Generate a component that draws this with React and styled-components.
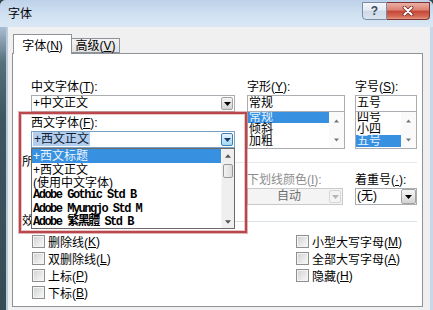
import React from 'react';
import styled, { createGlobalStyle } from 'styled-components';

const GlobalStyle = createGlobalStyle`
  html, body { margin: 0; padding: 0; background: #34474f; }
  body { width: 433px; height: 310px; overflow: hidden; }
  #root { width: 433px; height: 310px; }
  * { box-sizing: border-box; }
  u { text-decoration: underline; text-underline-offset: 1px; }
`;

const FONT = `"Liberation Sans", "Noto Sans CJK SC", sans-serif`;

const Window = styled.div`
  width: 433px;
  height: 310px;
  display: flex;
  flex-direction: column;
  font-family: ${FONT};
  font-size: 12px;
  color: #000;
  border-radius: 6px 6px 0 0;
  overflow: hidden;
  background: #c8d9ea;
`;

const TitleBar = styled.div`
  height: 27px;
  flex: none;
  display: flex;
  align-items: flex-start;
  justify-content: space-between;
  padding-left: 8px;
  background: linear-gradient(#bdd2e9, #d2e2f2 60%, #d9e7f5);
`;

const Title = styled.div`
  line-height: 29px;
  font-size: 12px;
`;

const CaptionGroup = styled.div`
  display: flex;
  margin: 2px 3px 0 0;
`;

const CaptionButton = styled.div`
  width: ${p => p.$w}px;
  height: 18px;
  display: flex;
  align-items: center;
  justify-content: center;
  border: 1px solid ${p => (p.$close ? '#7d3431' : '#7a8ca3')};
  border-radius: ${p => (p.$close ? '0 0 4px 0' : '0 0 0 4px')};
  background: ${p =>
    p.$close
      ? 'linear-gradient(#eab0a5 0%, #dc7f72 45%, #c64536 50%, #d56b58 85%, #e59c84 100%)'
      : 'linear-gradient(#f4f7fb 0%, #e3eaf3 45%, #cdd9e7 50%, #dbe4ef 100%)'};
  color: #3d4b5e;
  font-weight: bold;
  font-size: 12px;
  & + & {
    border-left: none;
  }
`;

const Body = styled.div`
  flex: 1;
  display: flex;
  min-height: 0;
`;

const LeftFrame = styled.div`
  width: 8px;
  flex: none;
  background: linear-gradient(to right, transparent 0 6px, #b9cadb 6px 8px),
    linear-gradient(#a9bdd2 0, #56707c 35px, #3e5660 90px, #364c55 100%);
`;

const RightFrame = styled.div`
  width: 3px;
  flex: none;
  background: #c9d8e8;
`;

const Client = styled.div`
  flex: 1;
  min-width: 0;
  display: flex;
  flex-direction: column;
  background: #f0f0f0;
  padding: 7px 7px 3px 4px;
`;

const TabRow = styled.div`
  display: flex;
  align-items: flex-end;
  height: 20px;
  margin: 0 0 -1px 1px;
  position: relative;
  z-index: 2;
`;

const Tab = styled.div`
  width: ${p => p.$w}px;
  height: ${p => (p.$active ? 20 : 15)}px;
  margin-bottom: ${p => (p.$active ? 0 : 1)}px;
  margin-left: ${p => (p.$active ? 0 : -1)}px;
  border: 1px solid #8e9299;
  border-bottom: ${p => (p.$active ? 'none' : '1px solid #8e9299')};
  background: ${p => (p.$active ? '#fff' : 'linear-gradient(#f4f4f4, #e1e1e1)')};
  display: flex;
  align-items: center;
  justify-content: center;
  font-size: 12px;
  line-height: 12px;
  padding-top: ${p => (p.$active ? 2 : 1)}px;
`;

const Panel = styled.div`
  flex: 1;
  position: relative;
  background: #fff;
  border: 1px solid #8e9299;
  padding: 26px 5px 0 18px;
  overflow: hidden;
`;

const TopRow = styled.div`
  display: flex;
  align-items: flex-start;
`;

const Col = styled.div`
  width: ${p => p.$w}px;
  margin-right: ${p => p.$mr || 0}px;
  flex: none;
  display: flex;
  flex-direction: column;
`;

const Label = styled.div`
  height: 14px;
  line-height: 14px;
  margin-top: ${p => p.$mt || 0}px;
  margin-bottom: 1px;
  white-space: nowrap;
  color: ${p => (p.$disabled ? '#8d8d8d' : '#000')};
`;

const Combo = styled.div`
  position: relative;
  height: 17px;
  border: 1px solid ${p => (p.$disabled ? '#c9c9c9' : p.$focus ? '#7c9fc4' : '#abadb3')};
  background: ${p => (p.$disabled ? '#f4f4f4' : '#fff')};
  display: flex;
  align-items: center;
  padding-left: 1px;
  color: ${p => (p.$disabled ? '#6d6d6d' : '#000')};
  white-space: nowrap;
`;

const ComboText = styled.span`
  flex: 1;
  line-height: 13px;
  text-align: ${p => (p.$center ? 'center' : 'left')};
`;

const SelText = styled.span`
  background: #b3cdec;
  line-height: 13px;
  padding: 0 1px;
  color: #0c1a33;
`;

const ArrowButton = styled.div`
  width: ${p => (p.$big ? 15 : 12)}px;
  height: ${p => (p.$big ? 15 : 13)}px;
  margin-right: ${p => (p.$big ? 0 : 1)}px;
  margin-left: auto;
  flex: none;
  display: flex;
  align-items: center;
  justify-content: center;
  border: 1px solid ${p => (p.$hot ? '#3c7fb1' : p.$disabled ? '#d6d6d6' : '#a3a3a3')};
  border-radius: 2px;
  background: ${p =>
    p.$hot
      ? 'linear-gradient(#eaf6fd, #bee6fd 50%, #a7d9f5)'
      : p.$disabled
      ? '#f4f4f4'
      : 'linear-gradient(#f4f4f4, #e6e6e6 50%, #d2d2d2)'};
`;

const Tri = ({ down = true, color = '#000', w = 7 }) => (
  <svg width={w} height="4" viewBox="0 0 7 4">
    <polygon points={down ? '0,0 7,0 3.5,4' : '0,4 7,4 3.5,0'} fill={color} />
  </svg>
);

const ListBox = styled.div`
  margin-top: -1px;
  height: 38px;
  border: 1px solid #abadb3;
  display: flex;
  overflow: hidden;
  background: #fff;
`;

const ListItems = styled.div`
  flex: 1;
  display: flex;
  flex-direction: column;
  margin-top: -1px;
`;

const ListItem = styled.div`
  height: 12px;
  line-height: 12px;
  flex: none;
  padding-left: 1px;
  background: ${p => (p.$sel ? '#3790e0' : 'transparent')};
  color: ${p => (p.$sel ? '#e6f3ff' : '#000')};
  white-space: nowrap;
`;

const MiniScroll = styled.div`
  width: 15px;
  flex: none;
  display: flex;
  flex-direction: column;
  justify-content: space-between;
  align-items: center;
  padding: 7px 0 6px;
  background: #fafafa;
`;

const DropList = styled.div`
  position: absolute;
  top: calc(100% + 1px);
  left: -1px;
  right: -1px;
  height: 81px;
  border: 1px solid #6a6a6a;
  background: #fff;
  display: flex;
  z-index: 4;
  overflow: hidden;
`;

const DropItems = styled.div`
  flex: 1;
  display: flex;
  flex-direction: column;
`;

const DropItem = styled.div`
  height: ${p => p.$h}px;
  line-height: ${p => p.$h}px;
  flex: none;
  padding-left: 1px;
  white-space: nowrap;
  font-size: ${p => (p.$mono ? 12 : 12)}px;
  font-family: ${p =>
    p.$mono ? `"Liberation Mono", "Noto Sans CJK TC", monospace` : FONT};
  font-weight: ${p => (p.$mono ? 'bold' : 'normal')};
  letter-spacing: ${p => (p.$mono ? '-1.5px' : '0')};
  background: ${p => (p.$sel ? '#3790e0' : 'transparent')};
  color: ${p => (p.$sel ? '#eaf5ff' : '#000')};
`;

const DropScroll = styled.div`
  width: 13px;
  flex: none;
  display: flex;
  flex-direction: column;
  background: #efefef;
  border-left: 1px solid #f6f6f6;
`;

const ScrollBtn = styled.div`
  height: 13px;
  flex: none;
  display: flex;
  align-items: center;
  justify-content: center;
`;

const Thumb = styled.div`
  height: 14px;
  flex: none;
  margin: 2px 1px 0;
  border: 1px solid #9a9a9a;
  border-radius: 2px;
  background: linear-gradient(to right, #f3f3f3, #dcdcdc);
`;

const Fill = styled.div`
  flex: 1;
`;

const GroupHeader = styled.div`
  display: flex;
  align-items: center;
  height: 14px;
  line-height: 14px;
  margin: ${p => p.$mt}px 0 0 -9px;
  white-space: nowrap;
  &::after {
    content: '';
    flex: 1;
    height: 1px;
    margin-left: 6px;
    background: ${p => p.$line};
  }
`;

const MidRow = styled.div`
  display: flex;
  margin-top: 4px;
  padding-left: ${p => p.$indent}px;
`;

const Effects = styled.div`
  display: grid;
  grid-template-columns: 264px 1fr;
  grid-template-rows: repeat(4, 17px);
  grid-auto-flow: column;
  margin-top: 5px;
  padding-left: 1px;
`;

const Check = styled.div`
  display: flex;
  align-items: center;
  white-space: nowrap;
`;

const Box = styled.span`
  width: 13px;
  height: 13px;
  flex: none;
  margin-right: 3px;
  border: 1px solid #8e8f8f;
  background: linear-gradient(135deg, #cfd0d2, #eeeeef 70%, #f6f6f6);
  box-shadow: inset 0 0 0 1px #f4f4f4;
`;

const Highlight = styled.div`
  position: absolute;
  left: 6px;
  top: 58px;
  width: 228px;
  height: 121px;
  border: 2px solid #b9474c;
  box-shadow: 0 0 0 1px rgba(200, 120, 124, 0.55), inset 0 0 0 1px rgba(214, 150, 152, 0.55);
  pointer-events: none;
  z-index: 6;
`;

const CloseIcon = () => (
  <svg width="14" height="10" viewBox="0 0 14 10">
    <path d="M3.5 1.5 L10.5 8.5 M10.5 1.5 L3.5 8.5" stroke="#6b2420" strokeWidth="3.8" strokeLinecap="round" />
    <path d="M3.5 1.5 L10.5 8.5 M10.5 1.5 L3.5 8.5" stroke="#ffffff" strokeWidth="2.2" strokeLinecap="round" />
  </svg>
);

const CheckItem = ({ children }) => (
  <Check>
    <Box />
    {children}
  </Check>
);

export default function App() {
  return (
    <>
      <GlobalStyle />
      <Window>
        <TitleBar>
          <Title>字体</Title>
          <CaptionGroup>
            <CaptionButton $w={25}>?</CaptionButton>
            <CaptionButton $w={43} $close>
              <CloseIcon />
            </CaptionButton>
          </CaptionGroup>
        </TitleBar>
        <Body>
          <LeftFrame />
          <Client>
            <TabRow>
              <Tab $active $w={59}>
                字体(<u>N</u>)
              </Tab>
              <Tab $w={49}>
                高级(<u>V</u>)
              </Tab>
            </TabRow>
            <Panel>
              <TopRow>
                <Col $w={204} $mr={12}>
                  <Label>
                    中文字体(<u>T</u>):
                  </Label>
                  <Combo>
                    <ComboText>+中文正文</ComboText>
                    <ArrowButton>
                      <Tri />
                    </ArrowButton>
                  </Combo>
                  <Label $mt={4}>
                    西文字体(<u>F</u>):
                  </Label>
                  <Combo $focus>
                    <ComboText>
                      <SelText>+西文正文</SelText>
                    </ComboText>
                    <ArrowButton $hot>
                      <Tri color="#1d3a5a" />
                    </ArrowButton>
                    <DropList>
                      <DropItems>
                        <DropItem $h={14} $sel>+西文标题</DropItem>
                        <DropItem $h={14}>+西文正文</DropItem>
                        <DropItem $h={12}>(使用中文字体)</DropItem>
                        <DropItem $h={13} $mono>Adobe Gothic Std B</DropItem>
                        <DropItem $h={14} $mono>Adobe Myungjo Std M</DropItem>
                        <DropItem $h={13} $mono>Adobe 繁黑體 Std B</DropItem>
                      </DropItems>
                      <DropScroll>
                        <ScrollBtn>
                          <Tri down={false} color="#555" w={6} />
                        </ScrollBtn>
                        <Thumb />
                        <Fill />
                        <ScrollBtn>
                          <Tri color="#555" w={6} />
                        </ScrollBtn>
                      </DropScroll>
                    </DropList>
                  </Combo>
                </Col>
                <Col $w={98} $mr={10}>
                  <Label>
                    字形(<u>Y</u>):
                  </Label>
                  <Combo>
                    <ComboText>常规</ComboText>
                  </Combo>
                  <ListBox>
                    <ListItems>
                      <ListItem $sel>常规</ListItem>
                      <ListItem>倾斜</ListItem>
                      <ListItem>加粗</ListItem>
                    </ListItems>
                    <MiniScroll>
                      <Tri down={false} color="#777" w={5} />
                      <Tri color="#777" w={5} />
                    </MiniScroll>
                  </ListBox>
                </Col>
                <Col $w={62}>
                  <Label>
                    字号(<u>S</u>):
                  </Label>
                  <Combo>
                    <ComboText>五号</ComboText>
                  </Combo>
                  <ListBox>
                    <ListItems>
                      <ListItem>四号</ListItem>
                      <ListItem>小四</ListItem>
                      <ListItem $sel>五号</ListItem>
                    </ListItems>
                    <MiniScroll>
                      <Tri down={false} color="#777" w={5} />
                      <Tri color="#777" w={5} />
                    </MiniScroll>
                  </ListBox>
                </Col>
              </TopRow>

              <GroupHeader $mt={6} $line="#e4e9ee">所有文字</GroupHeader>

              {/* the 字体颜色 / 下划线线型 fields lie under the open list */}
              <MidRow $indent={216}>
                <Col $w={96} $mr={12}>
                  <Label $disabled>
                    下划线颜色(<u>I</u>):
                  </Label>
                  <Combo $disabled>
                    <ComboText $center>自动</ComboText>
                    <ArrowButton $disabled>
                      <Tri color="#b5b5b5" />
                    </ArrowButton>
                  </Combo>
                </Col>
                <Col $w={62}>
                  <Label>
                    着重号(<u>·</u>):
                  </Label>
                  <Combo>
                    <ComboText>(无)</ComboText>
                    <ArrowButton $big>
                      <Tri />
                    </ArrowButton>
                  </Combo>
                </Col>
              </MidRow>

              <GroupHeader $mt={9} $line="#d9e1e8">效果</GroupHeader>

              <Effects>
                <CheckItem>
                  删除线(<u>K</u>)
                </CheckItem>
                <CheckItem>
                  双删除线(<u>L</u>)
                </CheckItem>
                <CheckItem>
                  上标(<u>P</u>)
                </CheckItem>
                <CheckItem>
                  下标(<u>B</u>)
                </CheckItem>
                <CheckItem>
                  小型大写字母(<u>M</u>)
                </CheckItem>
                <CheckItem>
                  全部大写字母(<u>A</u>)
                </CheckItem>
                <CheckItem>
                  隐藏(<u>H</u>)
                </CheckItem>
              </Effects>

              <Highlight />
            </Panel>
          </Client>
          <RightFrame />
        </Body>
      </Window>
    </>
  );
}
